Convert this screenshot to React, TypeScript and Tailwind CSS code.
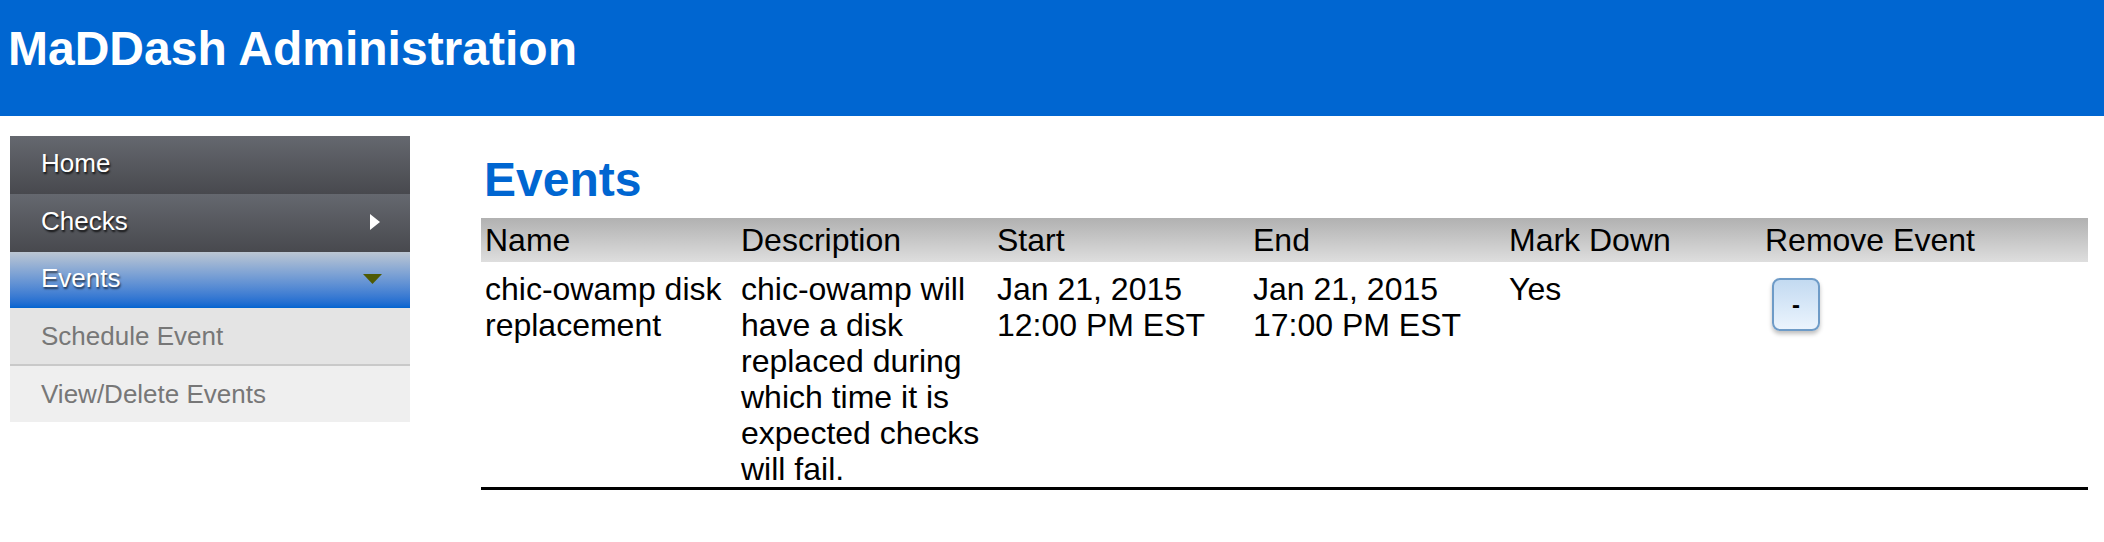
const rows = [
  {
    name: "chic-owamp disk replacement",
    description: "chic-owamp will have a disk replaced during which time it is expected checks will fail.",
    start: ["Jan 21, 2015", "12:00 PM EST"],
    end: ["Jan 21, 2015", "17:00 PM EST"],
    markDown: "Yes",
  },
];

const columns = ["Name", "Description", "Start", "End", "Mark Down", "Remove Event"];

export default function App() {
  return (
    <div className="min-h-screen bg-white font-['Liberation_Sans',Arial,sans-serif] text-black">
      {/* Header */}
      <header className="h-[116px] bg-[#0066d1] pl-[8px] pt-[22px]">
        <h1 className="text-[48px] font-bold leading-[54px] text-white">MaDDash Administration</h1>
      </header>

      <div className="flex items-start">
        {/* Sidebar */}
        <nav className="ml-[10px] mt-[20px] w-[400px] text-[26px]">
          <div className="flex h-[58px] items-center bg-gradient-to-b from-[#65686f] to-[#48494e] pb-[3px] pl-[31px] text-white [text-shadow:1px_2px_2px_rgba(0,0,0,0.8)]">
            Home
          </div>
          <div className="flex h-[58px] items-center justify-between bg-gradient-to-b from-[#65686f] to-[#48494e] pb-[3px] pl-[31px] pr-[30px] text-white [text-shadow:1px_2px_2px_rgba(0,0,0,0.8)]">
            <span>Checks</span>
            <svg width="10" height="16" viewBox="0 0 10 16">
              <polygon points="0,0 10,8 0,16" fill="#ffffff" />
            </svg>
          </div>
          <div className="flex h-[56px] items-center justify-between bg-gradient-to-b from-[#bcc6d2] to-[#0064d0] pb-[3px] pl-[31px] pr-[28px] text-white [text-shadow:1px_2px_2px_rgba(0,0,0,0.6)]">
            <span>Events</span>
            <svg width="19" height="10" viewBox="0 0 19 10">
              <polygon points="0,0 19,0 9.5,10" fill="#4f5a05" />
            </svg>
          </div>
          <div className="flex h-[58px] items-center border-b-2 border-[#c9c9c9] bg-[#e4e4e4] pl-[31px] text-[#777777]">
            Schedule Event
          </div>
          <div className="flex h-[56px] items-center bg-[#efefef] pl-[31px] text-[#777777]">
            View/Delete Events
          </div>
        </nav>

        {/* Main */}
        <main className="ml-[71px] mt-[37px] w-[1607px]">
          <h2 className="mb-[11px] pl-[3px] text-[48px] font-bold leading-[54px] text-[#0066d1]">Events</h2>
          <table className="w-full table-fixed border-collapse text-[32px] leading-[36px]">
            <colgroup>
              <col className="w-[256px]" />
              <col className="w-[256px]" />
              <col className="w-[256px]" />
              <col className="w-[256px]" />
              <col className="w-[256px]" />
              <col />
            </colgroup>
            <thead>
              <tr className="h-[44px] bg-gradient-to-b from-[#b1b1b1] to-[#dedede]">
                {columns.map((c) => (
                  <th key={c} className="pl-[4px] text-left align-middle font-normal">
                    {c}
                  </th>
                ))}
              </tr>
            </thead>
            <tbody>
              {rows.map((r) => (
                <tr key={r.name} className="border-b-[3px] border-black align-top">
                  <td className="pl-[4px] pt-[9px]">{r.name}</td>
                  <td className="pl-[4px] pr-[2px] pt-[9px]">{r.description}</td>
                  <td className="pl-[4px] pt-[9px]">
                    {r.start[0]}
                    <br />
                    {r.start[1]}
                  </td>
                  <td className="pl-[4px] pt-[9px]">
                    {r.end[0]}
                    <br />
                    {r.end[1]}
                  </td>
                  <td className="pl-[4px] pt-[9px]">{r.markDown}</td>
                  <td className="pl-[4px] pt-[9px]">
                    <button className="ml-[7px] mt-[7px] flex h-[53px] w-[48px] items-center justify-center rounded-[8px] border-2 border-[#6e9bc7] bg-gradient-to-b from-[#c3daf1] to-[#ebf4fd] text-[24px] font-bold leading-none shadow-[0_3px_4px_rgba(0,0,0,0.25)]">
                      -
                    </button>
                  </td>
                </tr>
              ))}
            </tbody>
          </table>
        </main>
      </div>
    </div>
  );
}
